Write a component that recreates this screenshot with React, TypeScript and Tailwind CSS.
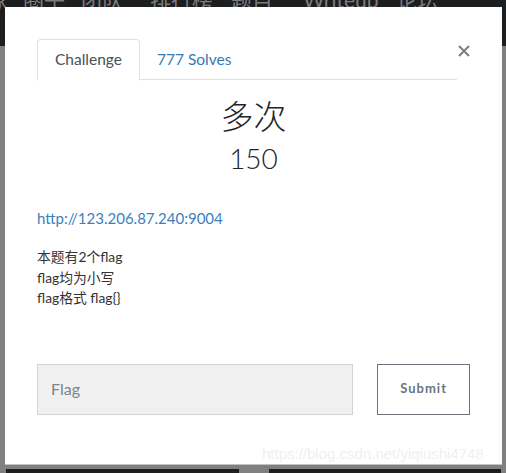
import React from "react";

export default function App() {
  const lato = { fontFamily: "Lato, 'Noto Sans CJK SC', sans-serif" };
  return (
    <div
      className="relative w-[506px] h-[473px] overflow-hidden bg-[#808080]"
      style={lato}
    >
      {/* dimmed top nav */}
      <div className="h-[46px] bg-[#1c1e20] overflow-hidden relative">
        <div className="flex items-start text-[21px] leading-[24px] text-[#7c7c7c] mt-[-12px] ml-[-12px] whitespace-nowrap">
          <span>家</span>
          <span className="ml-[14px]">圈子</span>
          <span className="ml-[16px]">团队</span>
          <span className="ml-[27px]">排行榜</span>
          <span className="ml-[18px]">题目</span>
          <span className="ml-[30px]">Writeup</span>
          <span className="ml-[18px]">论坛</span>
        </div>
      </div>

      {/* bottom dimmed cards */}
      <div className="absolute left-[6px] top-[469px] w-[233px] h-[10px] bg-[#1c1e20]" />
      <div className="absolute left-[269px] top-[469px] w-[232px] h-[10px] bg-[#1c1e20]" />

      {/* modal */}
      <div className="absolute left-[5px] top-[7px] w-[497px] h-[458px] bg-white border-b border-[#c4c4c4]">
        <div className="px-[32px] pt-[32px]">
          <div className="relative flex w-[420px] border-b border-[#dee2e6] h-[41px]">
            <div className="h-[42px] w-[103px] border border-[#dee2e6] border-b-white rounded-t-[4px] bg-white flex items-center justify-center text-[15.5px] text-[#495057] -mb-px">
              Challenge
            </div>
            <div className="h-[41px] flex items-center pl-[17px] text-[15.5px] text-[#337ab7]">
              777 Solves
            </div>
            <svg
              className="absolute left-[421px] top-[6px]"
              width="12"
              height="12"
              viewBox="0 0 12 12"
            >
              <path
                d="M1 1L11 11M11 1L1 11"
                stroke="#7d7d7d"
                strokeWidth="2"
              />
            </svg>
          </div>

          <div className="text-center text-[#212529]">
            <div
              className="text-[33px] leading-[40px] mt-[16px]"
              style={{ fontWeight: 300 }}
            >
              多次
            </div>
            <div className="text-[28px] leading-[36px] mt-[4px] font-light">150</div>
          </div>

          <div className="mt-[33px] text-[15px] leading-[18px] text-[#3a7fc1]">
            http://123.206.87.240:9004
          </div>

          <div className="mt-[20px] text-[13.8px] leading-[20.5px] text-[#333]">
            <div>本题有2个flag</div>
            <div>flag均为小写</div>
            <div>flag格式 flag{"{}"}</div>
          </div>

          <div className="flex mt-[55px] gap-[24px]">
            <div className="w-[317px] h-[51px] bg-[#f0f0f0] border border-[#ced4da] flex items-center pl-[13px] text-[16px] text-[#7d848b]">
              Flag
            </div>
            <div className="w-[93px] h-[51px] border border-[#6c757d] flex items-center justify-center text-[13px] font-bold tracking-[1px] text-[#6c757d]">
              Submit
            </div>
          </div>
        </div>

        <div
          className="absolute left-[257px] top-[438px] text-[15px] leading-[18px] text-[#f0f0f0] whitespace-nowrap"
          style={{ fontFamily: "'Liberation Sans', Arial, sans-serif" }}
        >
          https://blog.csdn.net/yiqiushi4748
        </div>
      </div>
    </div>
  );
}
